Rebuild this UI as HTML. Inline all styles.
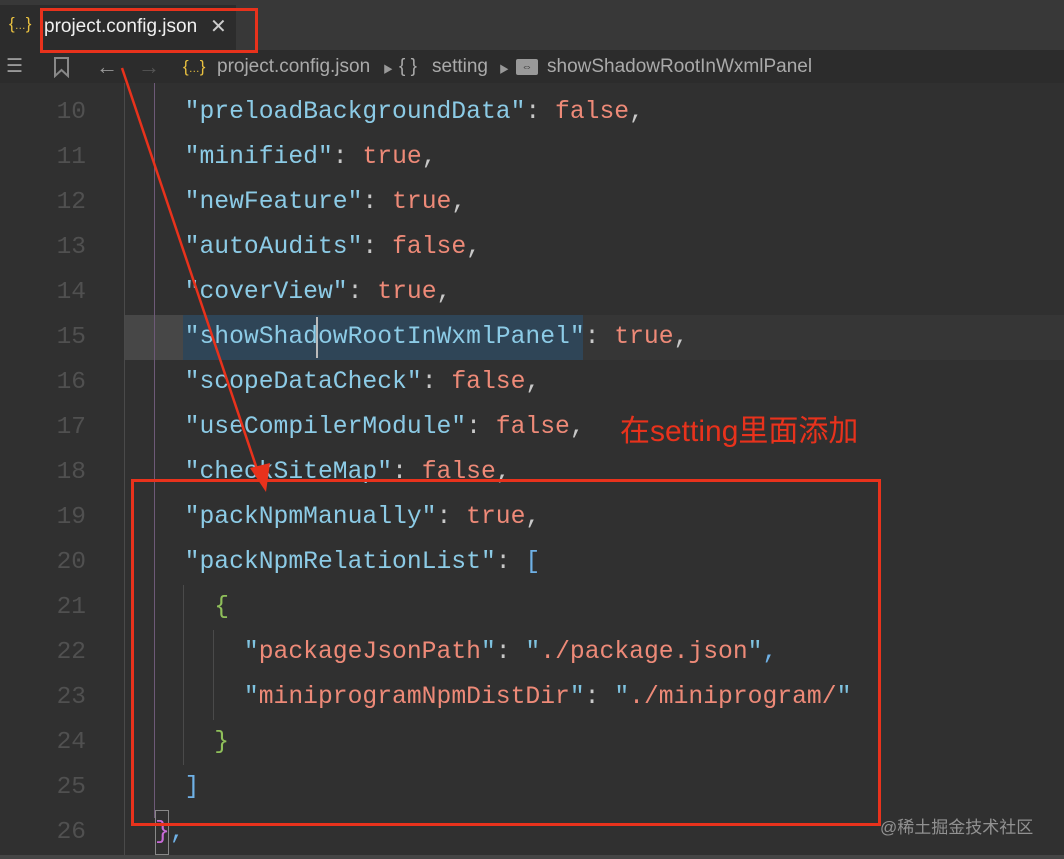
<!DOCTYPE html>
<html><head><meta charset="utf-8"><style>
*{margin:0;padding:0;box-sizing:border-box}
body{width:1064px;height:859px;background:#303030;position:relative;overflow:hidden;font-family:"Liberation Sans","Noto Sans CJK SC",sans-serif}
.abs{position:absolute}
.code{font-family:"Liberation Mono","DejaVu Sans Mono",monospace;font-size:24.7px;white-space:pre;line-height:45px;height:45px}
.k{color:#8ccbe6}.q{color:#7fc3e0}.v{color:#ee8a78}.p{color:#c8c8c8}.g{color:#8fbf5a}.b{color:#6fb1e6}.s{color:#ee8a78}
.ln{font-family:"Liberation Mono",monospace;font-size:24.5px;color:#505050;width:86px;text-align:right;line-height:45px;height:45px}
.bc{color:#aaa;font-size:19px;top:56px}
</style></head><body>
<div class="abs" style="left:0;top:0;width:1064px;height:50px;background:#383838"></div>
<div class="abs" style="left:0;top:5px;width:236px;height:45px;background:#2c2c2c"></div>
<div class="abs" style="left:9px;top:14px;color:#e8c040;font-size:17px">{<span style="font-size:11px">…</span>}</div>
<div class="abs" style="left:44px;top:16px;color:#f0f0f0;font-size:19px">project.config.json</div>
<div class="abs" style="left:210px;top:14px;color:#ccc;font-size:20px">✕</div>
<div class="abs" style="left:0;top:50px;width:1064px;height:33px;background:#2c2c2c"></div>
<div class="abs" style="left:40px;top:8px;width:218px;height:45px;border:3px solid #e8321c"></div>
<div class="abs" style="left:6px;top:55px;color:#999;font-size:19px">☰</div>
<svg class="abs" style="left:52px;top:56px" width="20" height="22"><path d="M3 2h13v18l-6.5-6-6.5 6z" fill="none" stroke="#888" stroke-width="2"/></svg>
<div class="abs" style="left:96px;top:54px;color:#999;font-size:22px">←</div>
<div class="abs" style="left:138px;top:54px;color:#555;font-size:22px">→</div>
<div class="abs" style="left:183px;top:57px;color:#e8c040;font-size:17px">{<span style="font-size:11px">…</span>}</div>
<div class="abs bc" style="left:217px">project.config.json</div>
<div class="abs" style="left:383px;top:61px;color:#999;font-size:10px">▶</div>
<div class="abs bc" style="left:399px">{ }</div>
<div class="abs bc" style="left:432px">setting</div>
<div class="abs" style="left:499px;top:61px;color:#999;font-size:10px">▶</div>
<div class="abs" style="left:516px;top:59px;width:22px;height:16px;background:#999;border-radius:2px;color:#333;font-size:11px;text-align:center;line-height:16px">⇔</div>
<div class="abs bc" style="left:547px">showShadowRootInWxmlPanel</div>
<div class="abs" style="left:124px;top:315px;width:940px;height:45px;background:#363636"></div>
<div class="abs" style="left:124px;top:315px;width:59px;height:45px;background:#474747"></div>
<div class="abs" style="left:183px;top:315px;width:400px;height:45px;background:#2f4557"></div>
<div class="abs" style="left:316px;top:317px;width:2px;height:41px;background:#bbb"></div>
<div class="abs" style="left:124px;top:83px;width:1px;height:772px;background:#4a4a4a"></div>
<div class="abs" style="left:154px;top:83px;width:1px;height:735px;background:#6e5a78"></div>
<div class="abs" style="left:183px;top:585px;width:1px;height:180px;background:#4a4a4a"></div>
<div class="abs" style="left:213px;top:630px;width:1px;height:90px;background:#4a4a4a"></div>
<div class="abs" style="left:155px;top:810px;width:14px;height:45px;border:1px solid #888"></div>
<div class="abs" style="left:0;top:90px">
<div class="ln">10</div><div class="ln">11</div><div class="ln">12</div><div class="ln">13</div><div class="ln">14</div><div class="ln">15</div><div class="ln">16</div><div class="ln">17</div><div class="ln">18</div><div class="ln">19</div><div class="ln">20</div><div class="ln">21</div><div class="ln">22</div><div class="ln">23</div><div class="ln">24</div><div class="ln">25</div><div class="ln">26</div>
</div>
<div class="abs" style="left:155px;top:90px">
<div class="code">  <span class="k">"preloadBackgroundData"</span><span class="p">: </span><span class="v">false</span><span class="p">,</span></div>
<div class="code">  <span class="k">"minified"</span><span class="p">: </span><span class="v">true</span><span class="p">,</span></div>
<div class="code">  <span class="k">"newFeature"</span><span class="p">: </span><span class="v">true</span><span class="p">,</span></div>
<div class="code">  <span class="k">"autoAudits"</span><span class="p">: </span><span class="v">false</span><span class="p">,</span></div>
<div class="code">  <span class="k">"coverView"</span><span class="p">: </span><span class="v">true</span><span class="p">,</span></div>
<div class="code">  <span class="k">"showShadowRootInWxmlPanel"</span><span class="p">: </span><span class="v">true</span><span class="p">,</span></div>
<div class="code">  <span class="k">"scopeDataCheck"</span><span class="p">: </span><span class="v">false</span><span class="p">,</span></div>
<div class="code">  <span class="k">"useCompilerModule"</span><span class="p">: </span><span class="v">false</span><span class="p">,</span></div>
<div class="code">  <span class="k">"checkSiteMap"</span><span class="p">: </span><span class="v">false</span><span class="p">,</span></div>
<div class="code">  <span class="k">"packNpmManually"</span><span class="p">: </span><span class="v">true</span><span class="p">,</span></div>
<div class="code">  <span class="k">"packNpmRelationList"</span><span class="p">: </span><span class="b">[</span></div>
<div class="code">    <span class="g">{</span></div>
<div class="code">      <span class="q">"</span><span class="s">packageJsonPath</span><span class="q">"</span><span class="p">: </span><span class="q">"</span><span class="s">./package.json</span><span class="q">"</span><span class="b">,</span></div>
<div class="code">      <span class="q">"</span><span class="s">miniprogramNpmDistDir</span><span class="q">"</span><span class="p">: </span><span class="q">"</span><span class="s">./miniprogram/</span><span class="q">"</span></div>
<div class="code">    <span class="g">}</span></div>
<div class="code">  <span class="b">]</span></div>
<div class="code"><span style="color:#c86ad8">}</span><span class="b">,</span></div>
</div>
<div class="abs" style="left:620px;top:406px;color:#e8321c;font-size:30px">在setting里面添加</div>
<div class="abs" style="left:131px;top:479px;width:750px;height:347px;border:3px solid #e8321c"></div>
<svg class="abs" style="left:0;top:0" width="1064" height="859"><line x1="122" y1="68" x2="260" y2="478" stroke="#e8321c" stroke-width="2.5"/><path d="M250 468 L266 492 L270 463 Z" fill="#e8321c"/></svg>
<div class="abs" style="left:880px;top:813px;color:#aaa;font-size:17px;opacity:.8">@稀土掘金技术社区</div>
<div class="abs" style="left:0;top:855px;width:1064px;height:4px;background:#454545"></div>
</body></html>
